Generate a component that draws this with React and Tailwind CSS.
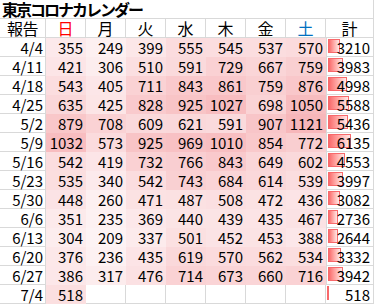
const days = [
  { label: "日", color: "text-[#ff0000]" },
  { label: "月", color: "text-black" },
  { label: "火", color: "text-black" },
  { label: "水", color: "text-black" },
  { label: "木", color: "text-black" },
  { label: "金", color: "text-black" },
  { label: "土", color: "text-[#0070c0]" },
];

const rows = [
  ["4/4", [355, 249, 399, 555, 545, 537, 570], 3210],
  ["4/11", [421, 306, 510, 591, 729, 667, 759], 3983],
  ["4/18", [543, 405, 711, 843, 861, 759, 876], 4998],
  ["4/25", [635, 425, 828, 925, 1027, 698, 1050], 5588],
  ["5/2", [879, 708, 609, 621, 591, 907, 1121], 5436],
  ["5/9", [1032, 573, 925, 969, 1010, 854, 772], 6135],
  ["5/16", [542, 419, 732, 766, 843, 649, 602], 4553],
  ["5/23", [535, 340, 542, 743, 684, 614, 539], 3997],
  ["5/30", [448, 260, 471, 487, 508, 472, 436], 3082],
  ["6/6", [351, 235, 369, 440, 439, 435, 467], 2736],
  ["6/13", [304, 209, 337, 501, 452, 453, 388], 2644],
  ["6/20", [376, 236, 435, 619, 570, 562, 534], 3332],
  ["6/27", [386, 317, 476, 714, 673, 660, 716], 3942],
  ["7/4", [518], 518],
];

const heat = (v) => {
  const t = (v - 209) / (1121 - 209);
  const r = Math.round(253 - 6 * t);
  const g = Math.round(243 - 60 * t);
  const b = Math.round(244 - 58 * t);
  return `rgb(${r},${g},${b})`;
};

const barWidth = (v) => 2 + ((v - 518) / (6135 - 518)) * 21;

const App = () => {
  return (
    <div
      className="w-[374px] h-[305px] bg-white text-black overflow-hidden"
      style={{ fontFamily: '"Noto Sans CJK JP", "Noto Sans", sans-serif' }}
    >
      <div className="grid grid-cols-[46px_repeat(7,40px)_48px] text-[15px] leading-[18px]">
        {/* title */}
        <div className="col-span-9 h-[19px] border-b border-r border-[#d9d9d9] pl-[2px] text-[16px] font-bold leading-[19px] tracking-[-2px] whitespace-nowrap">
          東京コロナカレンダー
        </div>

        {/* header */}
        <div className="h-[19px] border-b border-r border-[#d9d9d9] text-center text-[16px] leading-[19px] tracking-[-0.5px]">報告</div>
        {days.map((d) => (
          <div key={d.label} className={`h-[19px] border-b border-r border-[#d9d9d9] text-center text-[16px] leading-[19px] ${d.color}`}>
            {d.label}
          </div>
        ))}
        <div className="h-[19px] border-b border-r border-[#d9d9d9] text-center text-[16px] leading-[19px]">計</div>

        {/* data */}
        {rows.map(([date, vals, total]) => (
          <Row key={date} date={date} vals={vals} total={total} />
        ))}
      </div>
    </div>
  );
};

const Row = ({ date, vals, total }) => {
  const cells = [];
  for (let i = 0; i < 7; i++) {
    const v = vals[i];
    if (v === undefined) {
      cells.push(<div key={i} className="h-[19px] border-b border-r border-[#d9d9d9]" />);
    } else {
      cells.push(
        <div key={i} className="h-[19px] pr-[3px] pt-[1px] text-right" style={{ backgroundColor: heat(v) }}>
          {v}
        </div>
      );
    }
  }
  const full = vals.length === 7;
  return (
    <>
      <div className="h-[19px] border-b border-r border-[#d9d9d9] pr-[2px] pt-[1px] text-right">{date}</div>
      {cells}
      <div
        className={`relative h-[19px] border-b border-r border-[#d9d9d9] pr-[3px] pt-[1px] text-right ${full ? "border-l" : ""}`}
      >
        <div
          className="absolute left-[1px] top-[1px] h-[14px] border border-[#f8696b] bg-gradient-to-r from-[#f8696b] to-[#fde8e8]"
          style={{ width: barWidth(total) }}
        />
        <span className="relative">{total}</span>
      </div>
    </>
  );
};

export default App;
